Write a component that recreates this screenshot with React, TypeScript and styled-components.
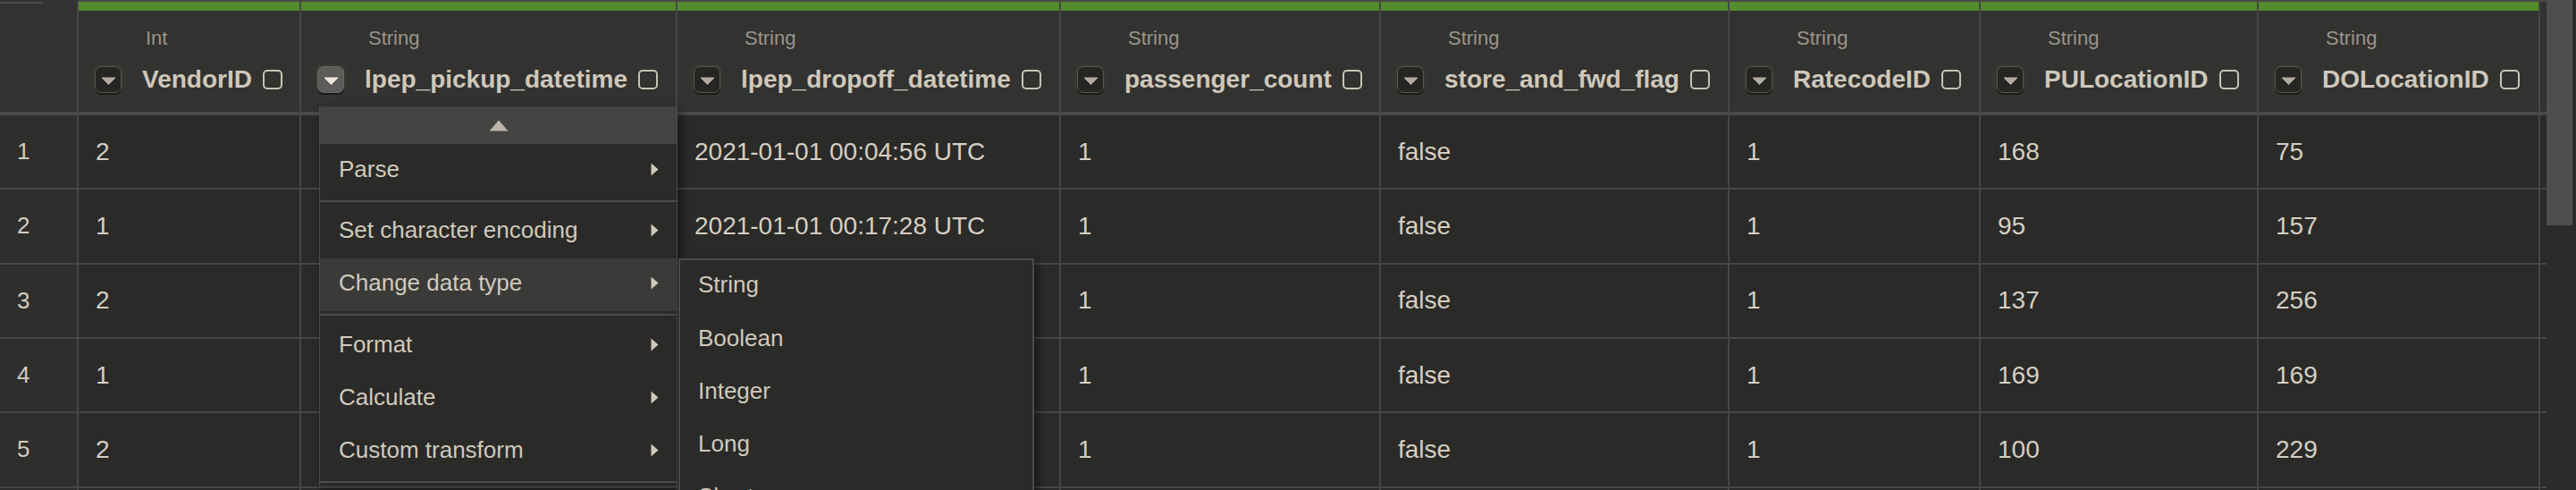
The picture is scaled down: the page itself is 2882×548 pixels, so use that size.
import React from 'react';
import styled, { createGlobalStyle } from 'styled-components';

const GlobalStyle = createGlobalStyle`
    html, body {
        margin: 0;
        padding: 0;
        background: #2a2a28;
        overflow: hidden;
    }
    body {
        font-family: 'Liberation Sans', Arial, sans-serif;
    }
`;

interface IColumn {
    name: string;
    type: string;
    width: number;
}

const columns: IColumn[] = [
    { name: 'VendorID', type: 'Int', width: 249 },
    { name: 'lpep_pickup_datetime', type: 'String', width: 421 },
    { name: 'lpep_dropoff_datetime', type: 'String', width: 429 },
    { name: 'passenger_count', type: 'String', width: 358 },
    { name: 'store_and_fwd_flag', type: 'String', width: 390 },
    { name: 'RatecodeID', type: 'String', width: 281 },
    { name: 'PULocationID', type: 'String', width: 311 },
    { name: 'DOLocationID', type: 'String', width: 315 },
];

// cells that sit under the open menu are left blank
const rows: string[][] = [
    ['2', '', '2021-01-01 00:04:56 UTC', '1', 'false', '1', '168', '75'],
    ['1', '', '2021-01-01 00:17:28 UTC', '1', 'false', '1', '95', '157'],
    ['2', '', '', '1', 'false', '1', '137', '256'],
    ['1', '', '', '1', 'false', '1', '169', '169'],
    ['2', '', '', '1', 'false', '1', '100', '229'],
    ['2', '', '', '1', 'false', '1', '82', '129'],
];

const menuItems = [
    { label: 'Parse', group: 0 },
    { label: 'Set character encoding', group: 1 },
    { label: 'Change data type', group: 1, active: true },
    { label: 'Format', group: 2 },
    { label: 'Calculate', group: 2 },
    { label: 'Custom transform', group: 2 },
];

const dataTypes = ['String', 'Boolean', 'Integer', 'Long', 'Short'];

const gridTemplate = `88px ${columns.map((c) => `${c.width}px`).join(' ')} 7px`;

const CaretDown = ({ color }: { color: string }) => (
    <svg width="17" height="9" viewBox="0 0 17 9">
        <path d="M1 1 L16 1 L8.5 8.5 Z" fill={color} strokeLinejoin="round" stroke={color} strokeWidth="1" />
    </svg>
);

const CaretRight = () => (
    <svg width="9" height="15" viewBox="0 0 9 15">
        <path d="M0.5 0.5 L8.5 7.5 L0.5 14.5 Z" fill="#cfc8bb" />
    </svg>
);

const CaretUp = () => (
    <svg width="22" height="13" viewBox="0 0 22 13">
        <path d="M11 0.5 L21.5 12.5 L0.5 12.5 Z" fill="#bdb5a8" />
    </svg>
);

const App: React.FC = () => (
    <>
        <GlobalStyle />
        <Page>
            <Table>
                <HeaderRow>
                    <IndexHeader />
                    {columns.map((col, i) => (
                        <HeaderCell key={col.name}>
                            <GreenBar />
                            <TypeLabel>{col.type}</TypeLabel>
                            <NameRow>
                                <DropButton $active={i === 1}>
                                    <CaretDown color={i === 1 ? '#ece6dc' : '#b3ab9f'} />
                                </DropButton>
                                <ColumnName>{col.name}</ColumnName>
                                <CheckBox />
                            </NameRow>
                            {i === 1 && (
                                <Menu>
                                    <ScrollUp>
                                        <CaretUp />
                                    </ScrollUp>
                                    {menuItems.map((item, k) => (
                                        <React.Fragment key={item.label}>
                                            {k > 0 && menuItems[k - 1].group !== item.group && <MenuSeparator />}
                                            <MenuItem $active={!!item.active}>
                                                <span>{item.label}</span>
                                                <CaretRight />
                                                {item.active && (
                                                    <SubMenu>
                                                        {dataTypes.map((t) => (
                                                            <SubMenuItem key={t}>{t}</SubMenuItem>
                                                        ))}
                                                    </SubMenu>
                                                )}
                                            </MenuItem>
                                        </React.Fragment>
                                    ))}
                                    <MenuSeparator />
                                </Menu>
                            )}
                        </HeaderCell>
                    ))}
                    <HeaderFiller />
                </HeaderRow>
                {rows.map((row, r) => (
                    <Row key={r}>
                        <IndexCell>{r + 1}</IndexCell>
                        {row.map((value, c) => (
                            <Cell key={c}>{value}</Cell>
                        ))}
                        <Filler />
                    </Row>
                ))}
            </Table>
            <Scrollbar>
                <ScrollThumb />
            </Scrollbar>
        </Page>
    </>
);

const Page = styled.div`
    display: flex;
    width: 2882px;
    height: 548px;
    overflow: hidden;
    background: #2a2a28;
`;

const Table = styled.div`
    width: 2849px;
    flex: none;
`;

const HeaderRow = styled.div`
    display: grid;
    grid-template-columns: ${gridTemplate};
    border-bottom: 4px solid #4a4a48;
    background: #323230;
`;

const IndexHeader = styled.div`
    height: 125px;
    box-sizing: border-box;
    border-right: 2px solid #464644;
    border-top: 2px solid #323230;
    background: linear-gradient(#4d4d4b, #4d4d4b) no-repeat 0 0 / 48px 2px, #323230;
`;

const HeaderCell = styled.div`
    position: relative;
    height: 125px;
    box-sizing: border-box;
    border-top: 2px solid #4a4a48;
    border-right: 2px solid #464644;
    background: #323230;
    display: flex;
    flex-direction: column;
`;

const HeaderFiller = styled.div`
    height: 125px;
    box-sizing: border-box;
    border-top: 2px solid #4a4a48;
    background: #323230;
`;

const GreenBar = styled.div`
    height: 10px;
    background: #558b2f;
`;

const TypeLabel = styled.div`
    margin-top: 18px;
    padding-left: 75px;
    font-size: 22px;
    line-height: 26px;
    color: #9a958b;
`;

const NameRow = styled.div`
    margin-top: 18px;
    height: 30px;
    display: flex;
    align-items: center;
    padding-left: 18px;
    white-space: nowrap;
`;

const DropButton = styled.div<{ $active: boolean }>`
    width: 30px;
    height: 30px;
    box-sizing: border-box;
    flex: none;
    border-radius: 7px;
    border: 1.5px solid ${(p) => (p.$active ? '#6a6966' : '#5a5751')};
    background: ${(p) => (p.$active ? '#5c5c5a' : '#252523')};
    box-shadow: 0 2px 1px rgba(0, 0, 0, 0.55), 0 0 7px rgba(190, 180, 160, 0.12);
    display: flex;
    align-items: center;
    justify-content: center;
    padding-top: 2px;
    margin-right: 23px;
`;

const ColumnName = styled.span`
    font-size: 28px;
    line-height: 30px;
    font-weight: 700;
    color: #cfc8bb;
`;

const CheckBox = styled.span`
    width: 22px;
    height: 22px;
    box-sizing: border-box;
    flex: none;
    margin-left: 12px;
    border: 2px solid #c9c2b6;
    border-radius: 5px;
`;

const Row = styled.div`
    display: grid;
    grid-template-columns: ${gridTemplate};
    height: 83.33px;
    box-sizing: border-box;
    border-bottom: 2px solid #464644;
`;

const IndexCell = styled.div`
    display: flex;
    align-items: center;
    padding-left: 19px;
    border-right: 2px solid #464644;
    background: #2e2e2c;
    font-size: 26px;
    color: #d3ccc0;
`;

const Cell = styled.div`
    display: flex;
    align-items: center;
    padding-left: 19px;
    border-right: 2px solid #464644;
    background: #2a2a28;
    font-size: 28px;
    color: #d5cec2;
    white-space: nowrap;
    overflow: hidden;
`;

const Filler = styled.div`
    background: #2a2a28;
`;

const Menu = styled.div`
    position: absolute;
    left: 20px;
    top: 117px;
    z-index: 10;
    width: 401px;
    box-sizing: border-box;
    border: 1px solid #4a4a48;
    border-top: none;
    background: #2a2a28;
    box-shadow: 4px 4px 10px rgba(0, 0, 0, 0.45);
`;

const ScrollUp = styled.div`
    height: 42px;
    background: #434341;
    display: flex;
    align-items: center;
    justify-content: center;
`;

const MenuItem = styled.div<{ $active: boolean }>`
    position: relative;
    height: 59.3px;
    box-sizing: border-box;
    display: flex;
    align-items: center;
    justify-content: space-between;
    padding: 0 20px 3px 21px;
    background: ${(p) => (p.$active ? '#3a3a38' : 'transparent')};
    font-size: 26px;
    color: #d0c9bc;
    white-space: nowrap;
`;

const MenuSeparator = styled.div`
    height: 2px;
    margin: 3.5px 0;
    background: #4b4b49;
`;

const SubMenu = styled.div`
    position: absolute;
    left: calc(100% + 2px);
    top: 0;
    width: 398px;
    box-sizing: border-box;
    border: 2px solid #4a4a48;
    background: #2a2a28;
    box-shadow: 4px 4px 10px rgba(0, 0, 0, 0.45);
`;

const SubMenuItem = styled.div`
    height: 59.3px;
    box-sizing: border-box;
    display: flex;
    align-items: center;
    padding: 0 0 3px 20px;
    font-size: 26px;
    color: #d0c9bc;
`;

const Scrollbar = styled.div`
    width: 33px;
    flex: none;
    background: #2b2b29;
`;

const ScrollThumb = styled.div`
    width: 29px;
    height: 252px;
    background: #4e4e4c;
`;

export default App;
